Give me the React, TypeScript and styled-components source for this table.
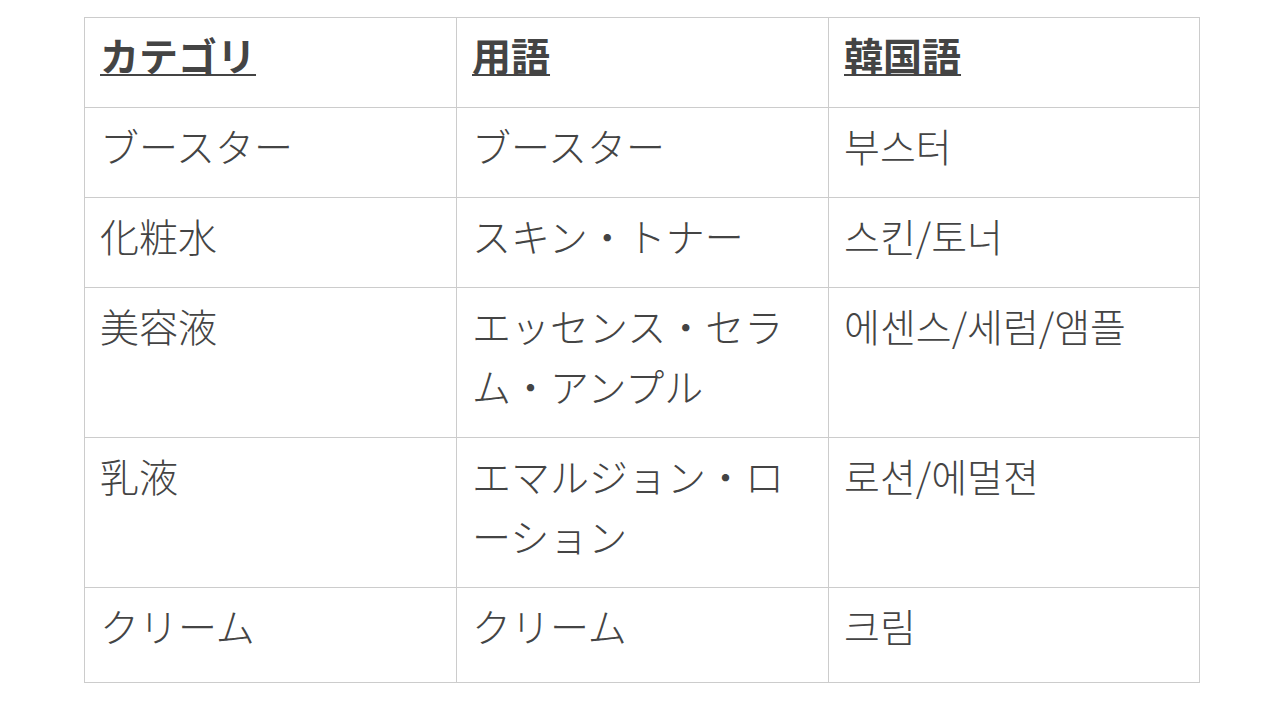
import styled, { createGlobalStyle } from 'styled-components';

const GlobalStyle = createGlobalStyle`
    body {
        margin: 0;
        background: #fff;
        font-family: 'Noto Sans CJK JP', 'Noto Sans CJK KR', 'Noto Sans', sans-serif;
        color: #444;
    }
`;

const Page = styled.div`
    padding: 17px 0 0 84px;
`;

const Table = styled.table`
    width: 1116px;
    border-collapse: collapse;
    table-layout: fixed;
    font-size: 39px;
    line-height: 60px;
`;

const Col = styled.col`
    width: 372px;
`;

const HeadCell = styled.th`
    border: 1px solid #ccc;
    padding: 6px 15px 23px;
    text-align: left;
    vertical-align: top;
    font-weight: 700;
    text-decoration: underline;
    text-decoration-thickness: 2px;
    text-underline-offset: 3px;
`;

const Cell = styled.td<{ $last?: boolean }>`
    border: 1px solid #ccc;
    padding: ${({ $last }) => ($last ? '7px 15px 27px' : '7px 15px 22px')};
    vertical-align: top;
    font-weight: 300;
`;

const rows: [string, string, string][] = [
    ['ブースター', 'ブースター', '부스터'],
    ['化粧水', 'スキン・トナー', '스킨/토너'],
    ['美容液', 'エッセンス・セラム・アンプル', '에센스/세럼/앰플'],
    ['乳液', 'エマルジョン・ローション', '로션/에멀젼'],
    ['クリーム', 'クリーム', '크림'],
];

export default function App() {
    return (
        <Page>
            <GlobalStyle />
            <Table>
                <colgroup>
                    <Col />
                    <Col />
                    <col />
                </colgroup>
                <thead>
                    <tr>
                        <HeadCell>カテゴリ</HeadCell>
                        <HeadCell>用語</HeadCell>
                        <HeadCell>韓国語</HeadCell>
                    </tr>
                </thead>
                <tbody>
                    {rows.map((row, i) => (
                        <tr key={row[0]}>
                            {row.map((text, j) => (
                                <Cell key={j} $last={i === rows.length - 1}>
                                    {text}
                                </Cell>
                            ))}
                        </tr>
                    ))}
                </tbody>
            </Table>
        </Page>
    );
}
